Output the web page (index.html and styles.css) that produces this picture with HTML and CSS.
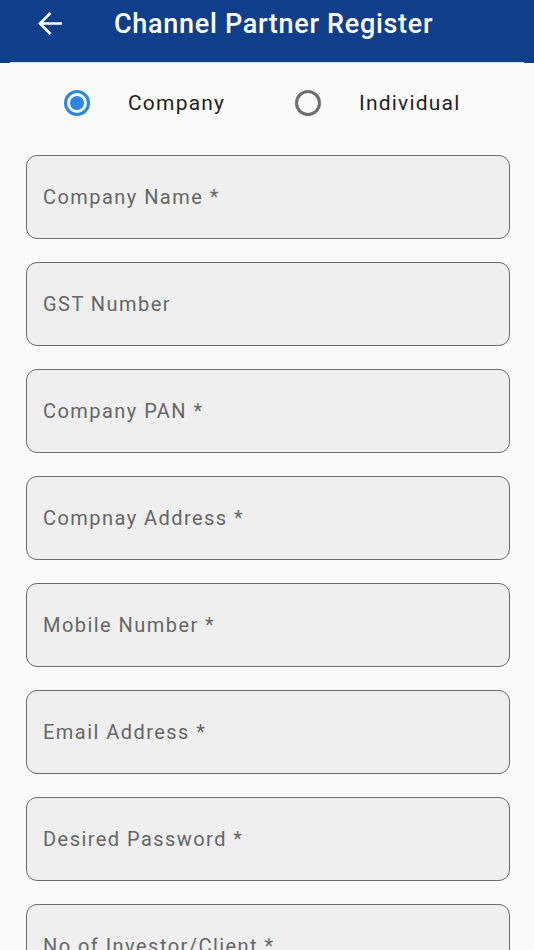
FILE: index.html
```html
<!DOCTYPE html>
<html>
<head>
<meta charset="utf-8">
<link rel="stylesheet" href="styles.css">
</head>
<body>
<header class="appbar">
  <svg class="back" width="26" height="26" viewBox="0 0 26 26"><path d="M24 12.5H2.5M12.5 2L2 12.5L12.5 23" fill="none" stroke="#fff" stroke-width="2.6" stroke-linecap="butt" stroke-linejoin="miter"/></svg>
  <h1 class="title">Channel Partner Register</h1>
</header>
<div class="divider"></div>
<main class="content">
  <div class="radios">
    <label class="radio"><span class="circle on"></span><span class="rlabel">Company</span></label>
    <label class="radio"><span class="circle"></span><span class="rlabel">Individual</span></label>
  </div>
  <div class="field"><span class="ph">Company Name *</span></div>
  <div class="field"><span class="ph">GST Number</span></div>
  <div class="field"><span class="ph">Company PAN *</span></div>
  <div class="field"><span class="ph">Compnay Address *</span></div>
  <div class="field"><span class="ph">Mobile Number *</span></div>
  <div class="field"><span class="ph">Email Address *</span></div>
  <div class="field"><span class="ph">Desired Password *</span></div>
  <div class="field"><span class="ph">No of Investor/Client *</span></div>
</main>
</body>
</html>
```
FILE: styles.css
```css
html, body {
  margin: 0;
  padding: 0;
  background: #fafafa;
  font-family: Roboto, "Noto Sans", sans-serif;
  overflow: hidden;
  height: 950px;
}
.appbar {
  height: 63px;
  background: #0f3f8a;
  display: flex;
  align-items: center;
  padding-left: 38px;
  box-sizing: border-box;
}
.back {
  width: 26px;
  height: 26px;
  margin-top: -15px;
  flex: none;
}
.title {
  margin: -15px 0 0 50px;
  color: #fff;
  font-size: 27px;
  font-weight: 500;
  letter-spacing: 0.7px;
}
.divider {
  height: 1px;
  margin: -1px 10px 0 10px;
  background: #d8dde8;
}
.content {
  padding: 0 24px 0 26px;
  display: flex;
  flex-direction: column;
  gap: 23px;
}
.radios {
  display: flex;
  height: 92px;
  align-items: center;
  padding-left: 38px;
  margin-bottom: -23px;
  box-sizing: border-box;
  padding-bottom: 12px;
}
.radio {
  display: flex;
  align-items: center;
  width: 231px;
  flex: none;
}
.circle {
  width: 20px;
  height: 20px;
  border: 3px solid #6e6e6e;
  border-radius: 50%;
  box-sizing: content-box;
  flex: none;
  position: relative;
}
.circle.on {
  border-color: #2b86df;
}
.circle.on::after {
  content: "";
  position: absolute;
  left: 3px;
  top: 3px;
  width: 14px;
  height: 14px;
  border-radius: 50%;
  background: #2b86df;
}
.rlabel {
  margin-left: 38px;
  font-size: 21px;
  letter-spacing: 1.2px;
  color: #1f1f1f;
}
.field {
  height: 84px;
  box-sizing: border-box;
  border: 1.5px solid #6b6b6b;
  border-radius: 11px;
  background: #efefef;
  display: flex;
  align-items: center;
  padding-left: 16px;
  flex: none;
}
.ph {
  font-size: 20px;
  letter-spacing: 1.45px;
  color: #666;
  margin-top: -1px;
}
```
